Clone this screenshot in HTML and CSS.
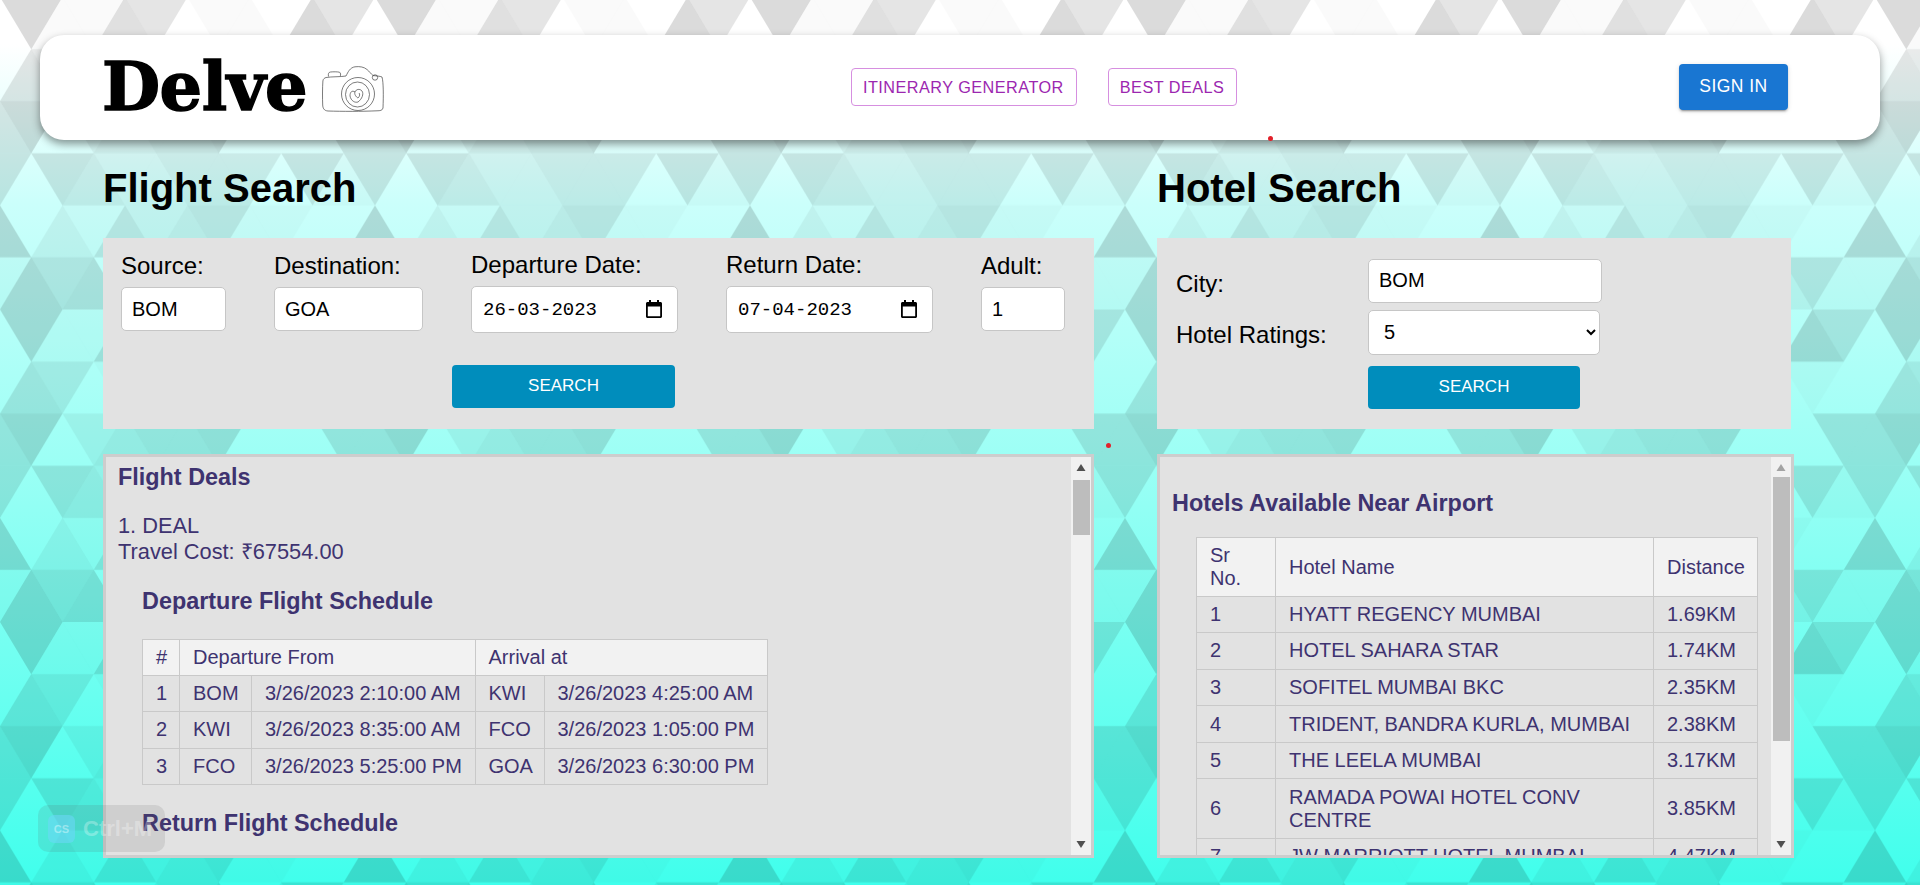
FILE: index.html
```html
<!DOCTYPE html>
<html lang="en">
<head>
<meta charset="utf-8">
<title>Delve</title>
<link rel="stylesheet" href="styles.css">
</head>
<body>
<svg class="backdrop" width="1920" height="885" aria-hidden="true">
  <defs>
    <path id="u" d="M0 0L31.25 52.08H-31.25Z"/>
    <path id="n" d="M0 0H62.5L31.25 52.08Z"/>
    <g id="tile">
      <use href="#u" x="62.5" y="0" class="d2"/><use href="#u" x="125" y="0" class="d12"/><use href="#u" x="250" y="0" class="d2"/><use href="#u" x="312.5" y="0" class="d14"/>
      <use href="#n" x="0" y="0" class="d14"/><use href="#n" x="62.5" y="0" class="d2"/><use href="#n" x="125" y="0" class="d10"/><use href="#n" x="187.5" y="0" class="d2"/><use href="#n" x="312.5" y="0" class="d10"/>
      <use href="#u" x="31.25" y="52.08" class="d10"/><use href="#u" x="156.25" y="52.08" class="d10"/><use href="#u" x="218.75" y="52.08" class="d10"/>
      <use href="#n" x="31.25" y="52.08" class="d8"/><use href="#n" x="93.75" y="52.08" class="d2"/><use href="#n" x="156.25" y="52.08" class="d5"/><use href="#n" x="218.75" y="52.08" class="d8"/><use href="#n" x="281.25" y="52.08" class="d2"/>
      <use href="#u" x="0" y="104.17" class="d10"/><use href="#u" x="125" y="104.17" class="d8"/><use href="#u" x="187.5" y="104.17" class="d10"/>
      <use href="#n" x="0" y="104.17" class="d14"/><use href="#n" x="62.5" y="104.17" class="d5"/><use href="#n" x="125" y="104.17" class="d10"/><use href="#n" x="187.5" y="104.17" class="d12"/><use href="#n" x="312.5" y="104.17" class="d10"/>
      <use href="#u" x="93.75" y="156.25" class="d8"/><use href="#u" x="156.25" y="156.25" class="d5"/><use href="#u" x="218.75" y="156.25" class="d8"/><use href="#u" x="343.75" y="156.25" class="d2"/>
      <use href="#n" x="31.25" y="156.25" class="d10"/><use href="#n" x="93.75" y="156.25" class="d5"/><use href="#n" x="156.25" y="156.25" class="d8"/><use href="#n" x="218.75" y="156.25" class="d8"/><use href="#n" x="281.25" y="156.25" class="d10"/><use href="#n" x="343.75" y="156.25" class="d10"/>
      <use href="#u" x="0" y="208.33" class="d14"/><use href="#u" x="62.5" y="208.33" class="d5"/><use href="#u" x="125" y="208.33" class="d10"/><use href="#u" x="187.5" y="208.33" class="d8"/><use href="#u" x="250" y="208.33" class="d2"/>
      <use href="#n" x="62.5" y="208.33" class="d2"/><use href="#n" x="125" y="208.33" class="d5"/><use href="#n" x="187.5" y="208.33" class="d10"/><use href="#n" x="250" y="208.33" class="d2"/>
      <use href="#u" x="31.25" y="260.42" class="d14"/><use href="#u" x="93.75" y="260.42" class="d12"/><use href="#u" x="156.25" y="260.42" class="d5"/><use href="#u" x="218.75" y="260.42" class="d12"/><use href="#u" x="281.25" y="260.42" class="d5"/><use href="#u" x="343.75" y="260.42" class="d2"/>
      <use href="#n" x="31.25" y="260.42" class="d10"/><use href="#n" x="156.25" y="260.42" class="d8"/><use href="#n" x="281.25" y="260.42" class="d10"/><use href="#n" x="343.75" y="260.42" class="d2"/>
    </g>
    <pattern id="facets" patternUnits="userSpaceOnUse" x="0" y="-3" width="375" height="312.5">
      <use href="#tile"/>
      <use href="#tile" x="375"/>
      <use href="#tile" x="-375"/>
    </pattern>
  </defs>
  <rect width="1920" height="885" fill="url(#facets)"/>
</svg>

<header class="topbar">
  <div class="brand">
    <span class="brand-name">Delve</span>
    <svg class="camera" width="62" height="46" viewBox="0 0 62 46" aria-hidden="true">
      <path d="M4 11.500C10 10.500 18 11 24 10C26 6 28 1.500 33 .8C38 .2 42 1 45 3.500C47.500 5.500 49 8 51 9.500C54 10 58 10 60 11C61.500 16 61.500 30 61 42C60.500 44.500 58 44.800 55 44.800C40 45.500 20 45.500 6 45C2 44.800 .8 42 .7 39C.4 32 .4 22 .9 15C1 13 2.500 12 4 11.500Z"/>
      <path d="M6.500 10.500C6 8 6.500 6.200 8.500 6C11.500 5.700 15 5.700 17.500 6.200C18.800 7 18.800 9 18.300 10"/>
      <circle cx="53" cy="11.500" r="2.700"/>
      <circle cx="36" cy="28" r="16.500"/>
      <ellipse cx="35.500" cy="28.500" rx="12" ry="12.500"/>
      <path d="M28 30C28 26 30 24 33 26C34 23 38 22.500 40 25C42 28 40 33 36 36C33 37 29 35 28 30ZM33 26C32 28 34 31 36 32C38 30 38 28 37 27"/>
    </svg>
  </div>
  <nav class="nav-links">
    <a class="nav-link">ITINERARY GENERATOR</a>
    <a class="nav-link">BEST DEALS</a>
  </nav>
  <button class="sign-in" type="button">SIGN IN</button>
</header>

<main class="columns">
  <section class="column column-flight">
    <h1 class="section-title">Flight Search</h1>
    <form class="search-form flight-form">
      <div class="field-row">
        <label class="field"><span class="field-label">Source:</span><input class="text-input input-source" type="text" value="BOM"></label>
        <label class="field"><span class="field-label">Destination:</span><input class="text-input input-dest" type="text" value="GOA"></label>
        <label class="field"><span class="field-label">Departure Date:</span>
          <span class="date-input"><input class="date-text" type="text" value="26-03-2023">
            <svg class="calendar" width="16" height="18" viewBox="0 0 16 18" aria-hidden="true"><path d="M3 0h2v2h6V0h2v2h1.500C15.300 2 16 2.700 16 3.500v13c0 .8-.7 1.500-1.500 1.500h-13C.7 18 0 17.300 0 16.500v-13C0 2.700.7 2 1.500 2H3zM1.800 6.500v9.700h12.400V6.500z"/></svg>
          </span></label>
        <label class="field"><span class="field-label">Return Date:</span>
          <span class="date-input"><input class="date-text" type="text" value="07-04-2023">
            <svg class="calendar" width="16" height="18" viewBox="0 0 16 18" aria-hidden="true"><path d="M3 0h2v2h6V0h2v2h1.500C15.300 2 16 2.700 16 3.500v13c0 .8-.7 1.500-1.500 1.500h-13C.7 18 0 17.300 0 16.500v-13C0 2.700.7 2 1.500 2H3zM1.800 6.500v9.700h12.400V6.500z"/></svg>
          </span></label>
        <label class="field"><span class="field-label">Adult:</span><input class="text-input input-adult" type="text" value="1"></label>
      </div>
      <button class="search-btn flight-search-btn" type="button">SEARCH</button>
    </form>
    <div class="result-list">
      <div class="result-pane flight-pane">
        <h3 class="result-heading deals-heading">Flight Deals</h3>
        <p class="deal-text">1. DEAL<br>Travel Cost: ₹67554.00</p>
        <div class="schedule">
          <h3 class="result-heading schedule-heading">Departure Flight Schedule</h3>
          <table class="data-table flight-table">
            <colgroup><col class="c-num"><col class="c-code"><col class="c-time"><col class="c-code2"><col class="c-time"></colgroup>
            <thead><tr><th>#</th><th colspan="2">Departure From</th><th colspan="2">Arrival at</th></tr></thead>
            <tbody>
              <tr><td>1</td><td>BOM</td><td>3/26/2023 2:10:00 AM</td><td>KWI</td><td>3/26/2023 4:25:00 AM</td></tr>
              <tr><td>2</td><td>KWI</td><td>3/26/2023 8:35:00 AM</td><td>FCO</td><td>3/26/2023 1:05:00 PM</td></tr>
              <tr><td>3</td><td>FCO</td><td>3/26/2023 5:25:00 PM</td><td>GOA</td><td>3/26/2023 6:30:00 PM</td></tr>
            </tbody>
          </table>
          <h3 class="result-heading schedule-heading">Return Flight Schedule</h3>
        </div>
      </div>
      <div class="scrollbar">
        <svg class="scroll-btn" width="20" height="20" viewBox="0 0 20 20" aria-hidden="true"><path d="M5.500 14h9L10 7z"/></svg>
        <div class="scroll-track"><div class="scroll-thumb flight-thumb"></div></div>
        <svg class="scroll-btn" width="20" height="20" viewBox="0 0 20 20" aria-hidden="true"><path d="M5.500 6h9L10 13z"/></svg>
      </div>
    </div>
  </section>

  <section class="column column-hotel">
    <h1 class="section-title">Hotel Search</h1>
    <form class="search-form hotel-form">
      <span class="field-label">City:</span>
      <input class="text-input input-city" type="text" value="BOM">
      <span class="field-label">Hotel Ratings:</span>
      <select class="rating-select"><option>5</option><option>4</option><option>3</option></select>
      <button class="search-btn hotel-search-btn" type="button">SEARCH</button>
    </form>
    <div class="result-list">
      <div class="result-pane hotel-pane">
        <h3 class="result-heading hotels-heading">Hotels Available Near Airport</h3>
        <table class="data-table hotel-table">
          <colgroup><col class="c-sr"><col class="c-name"><col class="c-dist"></colgroup>
          <thead><tr><th>Sr No.</th><th>Hotel Name</th><th>Distance</th></tr></thead>
          <tbody>
            <tr><td>1</td><td>HYATT REGENCY MUMBAI</td><td>1.69KM</td></tr>
            <tr><td>2</td><td>HOTEL SAHARA STAR</td><td>1.74KM</td></tr>
            <tr><td>3</td><td>SOFITEL MUMBAI BKC</td><td>2.35KM</td></tr>
            <tr><td>4</td><td>TRIDENT, BANDRA KURLA, MUMBAI</td><td>2.38KM</td></tr>
            <tr><td>5</td><td>THE LEELA MUMBAI</td><td>3.17KM</td></tr>
            <tr><td>6</td><td>RAMADA POWAI HOTEL CONV CENTRE</td><td>3.85KM</td></tr>
            <tr><td>7</td><td>JW MARRIOTT HOTEL MUMBAI</td><td>4.47KM</td></tr>
          </tbody>
        </table>
      </div>
      <div class="scrollbar scrollbar-top">
        <svg class="scroll-btn" width="20" height="20" viewBox="0 0 20 20" aria-hidden="true"><path d="M5.500 14h9L10 7z"/></svg>
        <div class="scroll-track"><div class="scroll-thumb hotel-thumb"></div></div>
        <svg class="scroll-btn" width="20" height="20" viewBox="0 0 20 20" aria-hidden="true"><path d="M5.500 6h9L10 13z"/></svg>
      </div>
    </div>
  </section>
</main>

<span class="dot dot-a"></span>
<span class="dot dot-b"></span>

<div class="shortcut-badge">
  <span class="shortcut-icon">CS</span>
  <span class="shortcut-keys">Ctrl+M</span>
</div>
</body>
</html>
```

FILE: styles.css
```css
* { box-sizing: border-box; }

html, body { margin: 0; height: 885px; overflow: hidden; }

body {
  font-family: "Liberation Sans", Arial, sans-serif;
  font-size: 20px;
  line-height: 26px;
  color: #000;
  position: relative;
}

/* faceted backdrop */
.backdrop {
  position: absolute;
  top: 0;
  left: 0;
  z-index: -1;
  background: linear-gradient(#ffffff 5%, #cbfffb 23%, #9cfff5 52%, #40ffec 100%);
}
.d2 { fill-opacity: .02; }
.d5 { fill-opacity: .05; }
.d8 { fill-opacity: .08; }
.d10 { fill-opacity: .10; }
.d12 { fill-opacity: .12; }
.d14 { fill-opacity: .14; }

/* top bar */
.topbar {
  margin: 35px 40px 0;
  height: 105px;
  padding: 0 92px 2px 62px;
  display: flex;
  align-items: center;
  background: #fff;
  border-radius: 24px;
  box-shadow: 0 4px 9px rgba(0, 0, 0, .42);
}
.brand { display: flex; align-items: center; width: 282px; }
.brand-name {
  font-family: "DejaVu Serif", serif;
  font-weight: 700;
  font-size: 67px;
  line-height: 80px;
  letter-spacing: -.5px;
  -webkit-text-stroke: 1.500px #000;
  width: 220px;
}
.camera { fill: none; stroke: #444; stroke-width: .7; margin-top: 5px; }
.nav-links { display: flex; gap: 31px; margin-left: 467px; }
.nav-link {
  display: block;
  height: 38px;
  padding: 0 12px 0 11px;
  border: 1px solid #d68fe0;
  border-radius: 4px;
  font-size: 16.250px;
  line-height: 36px;
  letter-spacing: .46px;
  color: #9c27b0;
}
.sign-in {
  margin-left: auto;
  width: 109px;
  height: 46px;
  border: 0;
  border-radius: 4px;
  background: #1976d2;
  color: #fff;
  font-family: "Liberation Sans", Arial, sans-serif;
  font-size: 17.500px;
  letter-spacing: .45px;
  box-shadow: 0 3px 1px -2px rgba(0,0,0,.2), 0 2px 2px 0 rgba(0,0,0,.14), 0 1px 5px 0 rgba(0,0,0,.12);
}

/* page columns */
.columns { display: flex; gap: 63px; padding: 0 126px 0 103px; }
.column-flight { width: 991px; }
.column-hotel { width: 637px; }
.section-title {
  margin: 25px 0 27px;
  font-size: 40px;
  line-height: 46px;
  font-weight: 700;
}

/* forms */
.search-form { height: 191px; background: #e2e2e2; }
.flight-form { padding: 13px 0 0 18px; }
.field-row { display: flex; align-items: center; gap: 48px; height: 82px; }
.field { display: flex; flex-direction: column; gap: 8px; }
.field-label { display: block; font-size: 24px; }
.text-input, .date-input, .rating-select {
  height: 44px;
  border: 1px solid #c6c6c6;
  border-radius: 5px;
  background: #fff;
  font-family: "Liberation Sans", Arial, sans-serif;
  font-size: 20px;
  color: #000;
}
.text-input { padding: 0 10px; outline: 0; }
.input-source { width: 105px; }
.input-dest { width: 149px; }
.input-adult { width: 84px; }
.input-city { width: 234px; padding-bottom: 1px; }
.date-input {
  display: flex;
  align-items: center;
  width: 207px;
  height: 47px;
  padding: 0 15px 0 11px;
}
.date-text {
  flex: 1;
  width: 0;
  padding: 2px 0 0;
  border: 0;
  outline: 0;
  background: none;
  font-family: "Liberation Mono", monospace;
  font-size: 19px;
  color: #000;
}
.calendar { flex: none; fill: #000; }
.search-btn {
  display: block;
  height: 43px;
  padding: 0 0 1px;
  border: 0;
  border-radius: 4px;
  background: #008dbc;
  color: #fff;
  font-family: "Liberation Sans", Arial, sans-serif;
  font-size: 17px;
}
.flight-search-btn { width: 223px; margin: 32px 0 0 331px; }
.hotel-form {
  display: grid;
  width: 634px;
  grid-template-columns: 192px 234px;
  grid-template-rows: 44px 45px 43px;
  row-gap: 7px;
  padding: 21px 0 0 19px;
  align-items: center;
}
.hotel-form .field-label { padding-top: 5px; }
.hotel-search-btn { grid-column: 2; width: 212px; margin-top: 8px; }
.rating-select { width: 232px; height: 45px; padding: 0 0 2px 11px; outline: 0; }

/* result panes with their scrollbars */
.result-list {
  display: flex;
  margin-top: 25px;
  height: 404px;
  border: 3px solid #cdcdcd;
  background: #e2e2e2;
  color: #3e3370;
}
.result-pane { flex: 1; min-width: 0; padding: 0 12px; overflow: hidden; }
.flight-pane { padding-top: 5px; }
.hotel-pane { padding-top: 31px; }
.scrollbar {
  flex: none;
  display: flex;
  flex-direction: column;
  width: 20px;
  background: #f1f1f1;
}
.scroll-btn { flex: none; fill: #505050; }
.scrollbar-top .scroll-btn:first-child { fill: #a3a3a3; }
.scroll-track { flex: 1; }
.scroll-thumb { margin: 0 1px 0 2px; background: #bdbdbd; }
.flight-thumb { height: 55px; margin-top: 3px; }
.hotel-thumb { height: 264px; }

.result-heading { margin: 0; font-size: 23.400px; line-height: 30px; font-weight: 700; }
.deals-heading { margin-bottom: 21px; }
.deal-text { margin: 0 0 21px; font-size: 21.800px; }
.schedule { margin-left: 24px; }
.schedule-heading { margin-bottom: 23px; }
.hotels-heading { margin-bottom: 19px; }
.hotel-table { margin-left: 24px; }

/* tables */
.data-table {
  border-collapse: collapse;
  table-layout: fixed;
  line-height: 23px;
}
.data-table th, .data-table td {
  padding: 6.300px 13px;
  border: 1px solid #c9c9c9;
  font-weight: 400;
  text-align: left;
  vertical-align: middle;
}
.data-table th { padding-top: 6px; padding-bottom: 5.500px; background: #f2f2f2; }
.flight-table { width: 625px; margin-bottom: 23px; white-space: nowrap; }
.flight-table td, .flight-table th { padding-right: 0; }
.hotel-table { width: 561px; }
.c-num { width: 37px; }
.c-code { width: 72px; }
.c-time { width: 223.500px; }
.c-code2 { width: 69px; }
.c-sr { width: 79px; }
.c-name { width: 378px; }
.c-dist { width: 104px; }

/* stray overlay marks */
.dot {
  position: absolute;
  width: 5px;
  height: 5px;
  border-radius: 50%;
  background: #e2202a;
}
.dot-a { left: 1268px; top: 136px; }
.dot-b { left: 1106px; top: 443px; }

.shortcut-badge {
  position: absolute;
  left: 38px;
  top: 805px;
  width: 127px;
  height: 47px;
  display: flex;
  align-items: center;
  gap: 8px;
  padding-left: 10px;
  border-radius: 10px;
  background: rgba(90, 90, 90, .14);
  pointer-events: none;
}
.shortcut-icon {
  width: 27px;
  height: 28px;
  border-radius: 6px;
  background: rgba(110, 215, 250, .55);
  color: rgba(255, 255, 255, .4);
  font-size: 11px;
  font-weight: 700;
  line-height: 28px;
  text-align: center;
}
.shortcut-keys {
  font-size: 22px;
  font-weight: 700;
  color: rgba(255, 255, 255, .3);
}
```
